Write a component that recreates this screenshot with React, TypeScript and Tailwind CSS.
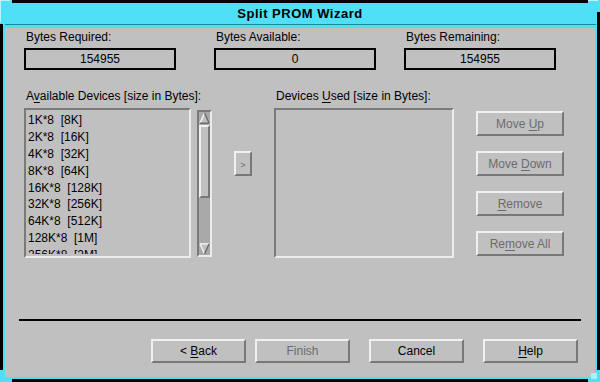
import React from "react";

const raised =
  "border-2 border-t-[#f1f1f1] border-l-[#f1f1f1] border-r-[#787878] border-b-[#787878] bg-[#c0c0c0]";
const sunken =
  "border-2 border-t-[#7a7a7a] border-l-[#7a7a7a] border-r-[#ececec] border-b-[#ececec]";

function Field({ label, value, w }: { label: string; value: string; w: string }) {
  return (
    <div className={w}>
      <div className="pl-[2px] leading-[14px] h-[14px] whitespace-nowrap">{label}</div>
      <div className="mt-[4px] h-[22px] border-2 border-black flex items-center justify-center leading-[14px]">
        <span>{value}</span>
      </div>
    </div>
  );
}

function Btn({
  children,
  w,
  h,
  disabled,
}: {
  children: React.ReactNode;
  w: string;
  h: string;
  disabled?: boolean;
}) {
  return (
    <div
      className={`${raised} ${w} ${h} flex items-center justify-center leading-[14px] ${
        disabled ? "text-[#6c6c6c]" : "text-black"
      }`}
    >
      <span className="whitespace-pre">{children}</span>
    </div>
  );
}

const U = ({ c }: { c: string }) => (
  <span className="underline underline-offset-[2px] decoration-1">{c}</span>
);

const devices = [
  "1K*8  [8K]",
  "2K*8  [16K]",
  "4K*8  [32K]",
  "8K*8  [64K]",
  "16K*8  [128K]",
  "32K*8  [256K]",
  "64K*8  [512K]",
  "128K*8  [1M]",
  "256K*8  [2M]",
];

function Scrollbar() {
  return (
    <div
      className={`mt-[2px] w-[15px] h-[147px] ${sunken} bg-[#a9a9a9] flex flex-col`}
    >
      <svg width="11" height="12" viewBox="0 0 11 12" className="block shrink-0">
        <polygon points="5.5,1 1,11 10,11" fill="#c0c0c0" />
        <line x1="1" y1="11" x2="5.5" y2="1" stroke="#f4f4f4" strokeWidth="1.4" />
        <line x1="5.5" y1="1" x2="10" y2="11" stroke="#6a6a6a" strokeWidth="1.4" />
        <line x1="1" y1="11.2" x2="10" y2="11.2" stroke="#6a6a6a" strokeWidth="1.4" />
      </svg>
      <div className={`mt-px h-[73px] w-[11px] ${raised}`} />
      <div className="flex-1" />
      <svg width="11" height="12" viewBox="0 0 11 12" className="block shrink-0">
        <polygon points="1,1 10,1 5.5,11" fill="#c0c0c0" />
        <line x1="1" y1="0.8" x2="10" y2="0.8" stroke="#f4f4f4" strokeWidth="1.4" />
        <line x1="1" y1="1" x2="5.5" y2="11" stroke="#f4f4f4" strokeWidth="1.4" />
        <line x1="10" y1="1" x2="5.5" y2="11" stroke="#6a6a6a" strokeWidth="1.4" />
      </svg>
    </div>
  );
}

export default function App() {
  const cyan = "bg-[#4fdff7]";
  return (
    <div className="relative w-[600px] h-[382px] bg-black p-[3px] font-['Liberation_Sans',Arial,sans-serif] text-black text-[12px]">
      <div className={`flex flex-col h-full ${cyan}`}>
        {/* Title bar */}
        <div className="h-[21px] leading-[21px] text-center text-[13px] font-bold tracking-[0.5px]">
          Split PROM Wizard
        </div>
        <div className="h-px ml-[2px] mr-[1px] bg-[#22879b]" />
        {/* Body */}
        <div className="flex-1 mt-[3px] ml-[2px] mr-[2px] mb-[2px] bg-[#c0c0c0] flex flex-col pt-[2px]">
          {/* Top fields */}
          <div className="flex pl-[19px]">
            <Field label="Bytes Required:" value="154955" w="w-[152px]" />
            <div className="ml-[38px]">
              <Field label="Bytes Available:" value="0" w="w-[162px]" />
            </div>
            <div className="ml-[28px]">
              <Field label="Bytes Remaining:" value="154955" w="w-[152px]" />
            </div>
          </div>

          {/* Lists row */}
          <div className="mt-[19px] flex items-start pl-[19px]">
            <div>
              <div className="pl-[2px] leading-[14px] h-[14px] whitespace-nowrap">
                A<U c="v" />ailable Devices [size in Bytes]:
              </div>
              <div className="mt-[5px] flex items-start">
                <div className={`w-[167px] h-[150px] ${sunken}`}>
                  <div className="mt-[2px] h-[142px] overflow-hidden pl-[2px]">
                    {devices.map((d) => (
                      <div key={d} className="leading-[16.875px] h-[16.875px] whitespace-pre">
                        {d}
                      </div>
                    ))}
                  </div>
                </div>
                <div className="ml-[6px]">
                  <Scrollbar />
                </div>
              </div>
            </div>

            <div className="ml-[22px] mt-[62px]">
              <Btn w="w-[18px]" h="h-[25px]" disabled>
                <span className="text-[9px] leading-[9px]">&gt;</span>
              </Btn>
            </div>

            <div className="ml-[22px]">
              <div className="pl-[2px] leading-[14px] h-[14px] whitespace-nowrap">
                Devices <U c="U" />sed [size in Bytes]:
              </div>
              <div className={`mt-[5px] w-[180px] h-[150px] ${sunken}`} />
            </div>

            <div className="ml-[22px] mt-[22px] flex flex-col gap-[15px]">
              <Btn w="w-[88px]" h="h-[25px]" disabled>
                Move <U c="U" />p
              </Btn>
              <Btn w="w-[88px]" h="h-[25px]" disabled>
                Move <U c="D" />own
              </Btn>
              <Btn w="w-[88px]" h="h-[25px]" disabled>
                <U c="R" />emove
              </Btn>
              <Btn w="w-[88px]" h="h-[25px]" disabled>
                Re<U c="m" />ove All
              </Btn>
            </div>
          </div>

          {/* Separator */}
          <div className="mt-[61px] ml-[14px] w-[562px] h-[2px] bg-black" />

          {/* Bottom buttons */}
          <div className="mt-[18px] flex pl-[146px]">
            <Btn w="w-[95px]" h="h-[24px]">
              &lt; <U c="B" />ack
            </Btn>
            <div className="ml-[9px]">
              <Btn w="w-[95px]" h="h-[24px]" disabled>
                Finish
              </Btn>
            </div>
            <div className="ml-[19px]">
              <Btn w="w-[95px]" h="h-[24px]">
                Cancel
              </Btn>
            </div>
            <div className="ml-[19px]">
              <Btn w="w-[95px]" h="h-[24px]">
                <U c="H" />elp
              </Btn>
            </div>
          </div>
        </div>
      </div>

      {/* Frame corner handles */}
      <div className={`absolute left-0 top-0 w-[12px] h-[3px] ${cyan}`} />
      <div className={`absolute left-0 top-0 w-[3px] h-[24px] ${cyan}`} />
      <div className="absolute left-0 top-0 w-[10px] h-px bg-[#b8f6ff]" />
      <div className="absolute left-0 top-0 w-px h-[22px] bg-[#b8f6ff]" />
      <div className={`absolute right-0 top-0 w-[12px] h-[3px] ${cyan}`} />
      <div className={`absolute right-0 top-0 w-[3px] h-[12px] ${cyan}`} />
      <div className="absolute right-[2px] top-0 w-[10px] h-px bg-[#b8f6ff]" />
      <div className={`absolute left-0 bottom-0 w-[12px] h-[3px] ${cyan}`} />
      <div className={`absolute left-0 bottom-0 w-[3px] h-[12px] ${cyan}`} />
      <div className={`absolute right-0 bottom-0 w-[12px] h-[3px] ${cyan}`} />
      <div className={`absolute right-0 bottom-0 w-[3px] h-[12px] ${cyan}`} />
      <div className="absolute right-[3px] bottom-[3px] w-[6px] h-[6px] bg-[#a6f2ff]" />
    </div>
  );
}
